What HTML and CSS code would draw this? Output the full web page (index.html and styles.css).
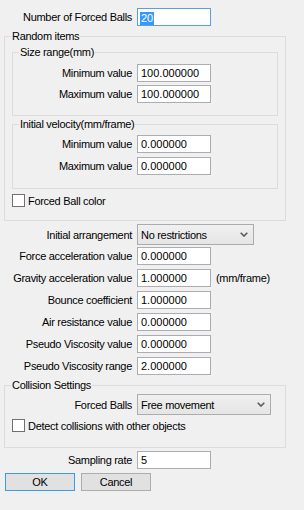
FILE: index.html
```html
<!DOCTYPE html>
<html lang="en">
<head>
  <meta charset="UTF-8">
  <title>Forced Balls</title>
  <link rel="stylesheet" href="styles.css">
</head>
<body>
  <div class="dialog">

    <div class="row">
      <label>Number of Forced Balls</label>
      <div class="edit focus"><span class="sel">20</span></div>
    </div>

    <fieldset class="group outer">
      <legend>Random items</legend>

      <fieldset class="group inner size">
        <legend>Size range(mm)</legend>
        <div class="row">
          <label>Minimum value</label>
          <div class="edit">100.000000</div>
        </div>
        <div class="row tight">
          <label>Maximum value</label>
          <div class="edit">100.000000</div>
        </div>
      </fieldset>

      <fieldset class="group inner velocity">
        <legend>Initial velocity(mm/frame)</legend>
        <div class="row">
          <label>Minimum value</label>
          <div class="edit">0.000000</div>
        </div>
        <div class="row">
          <label>Maximum value</label>
          <div class="edit">0.000000</div>
        </div>
      </fieldset>

      <div class="check ball-color">
        <span class="box"></span>
        <span>Forced Ball color</span>
      </div>
    </fieldset>

    <div class="row arrangement">
      <label>Initial arrangement</label>
      <div class="combo">
        <span>No restrictions</span>
        <svg width="8" height="5" viewBox="0 0 8 5"><polyline points="0.7,0.7 4,4 7.3,0.7" fill="none" stroke="#5a5a5a" stroke-width="1.6"/></svg>
      </div>
    </div>

    <div class="params">
      <div class="row">
        <label>Force acceleration value</label>
        <div class="edit">0.000000</div>
      </div>
      <div class="row">
        <label>Gravity acceleration value</label>
        <div class="edit">1.000000</div>
        <span class="unit">(mm/frame)</span>
      </div>
      <div class="row">
        <label>Bounce coefficient</label>
        <div class="edit">1.000000</div>
      </div>
      <div class="row">
        <label>Air resistance value</label>
        <div class="edit">0.000000</div>
      </div>
      <div class="row">
        <label>Pseudo Viscosity value</label>
        <div class="edit">0.000000</div>
      </div>
      <div class="row">
        <label>Pseudo Viscosity range</label>
        <div class="edit">2.000000</div>
      </div>
    </div>

    <fieldset class="group outer collision">
      <legend>Collision Settings</legend>
      <div class="row">
        <label>Forced Balls</label>
        <div class="combo wide">
          <span>Free movement</span>
          <svg width="8" height="5" viewBox="0 0 8 5"><polyline points="0.7,0.7 4,4 7.3,0.7" fill="none" stroke="#5a5a5a" stroke-width="1.6"/></svg>
        </div>
      </div>
      <div class="check detect">
        <span class="box"></span>
        <span>Detect collisions with other objects</span>
      </div>
    </fieldset>

    <div class="row sampling">
      <label>Sampling rate</label>
      <div class="edit">5</div>
    </div>

    <div class="buttons">
      <button class="btn default">OK</button>
      <button class="btn">Cancel</button>
    </div>

  </div>
</body>
</html>
```

FILE: styles.css
```css
* { box-sizing: border-box; }

body {
  margin: 0;
  background-color: #f0f0f0;
  font-family: "Liberation Sans", Arial, sans-serif;
  font-size: 11px;
  letter-spacing: -0.3px;
  color: #000;
}

.dialog {
  --lw: 132px;
  padding-top: 8px;
}

.row {
  display: flex;
  align-items: center;
  gap: 5px;
  height: 18px;
}

.row + .row {
  margin-top: 4px;
}

.row.tight {
  margin-top: 3px;
}

.row label {
  width: var(--lw);
  flex: none;
  text-align: right;
  white-space: nowrap;
}

.edit {
  width: 74px;
  height: 18px;
  border: 1px solid #abadb3;
  background: #fff;
  padding: 0 3px;
  line-height: 16px;
  letter-spacing: 0;
  white-space: nowrap;
}

.edit.focus {
  border-color: #5a9fe6;
  padding-left: 2px;
}

.sel {
  display: inline-block;
  background: #3399ff;
  color: #fff;
  line-height: 13px;
  padding: 0 1px;
  vertical-align: middle;
}

/* group boxes */
.group {
  margin: 0;
  padding: 0;
  border: 1px solid #dcdcdc;
  min-width: 0;
}

.group legend {
  padding: 0 1px;
  margin-left: 6px;
  line-height: 13px;
}

.outer {
  margin-left: 4px;
  width: 282px;
}

.dialog > .outer {
  margin-top: 4px;
  padding-bottom: 13px;
}

.inner {
  --lw: 119px;
  margin-left: 7px;
  width: 266px;
}

.size {
  margin-top: 3px;
  padding-top: 5px;
  padding-bottom: 12px;
}

.velocity {
  margin-top: 2px;
  padding-top: 4px;
  padding-bottom: 13px;
}

.check {
  display: flex;
  align-items: center;
  gap: 3px;
  height: 13px;
  margin-left: 7px;
  white-space: nowrap;
}

.check .box {
  width: 13px;
  height: 13px;
  border: 1px solid #707070;
  background: #fff;
  flex: none;
}

.ball-color {
  margin-top: 5px;
}

/* combos */
.combo {
  width: 117px;
  height: 21px;
  border: 1px solid #acacac;
  background: linear-gradient(#f0f0f0, #e5e5e5);
  display: flex;
  align-items: center;
  justify-content: space-between;
  padding: 0 5px 0 3px;
  white-space: nowrap;
}

.combo.wide {
  width: 134px;
}

.row.arrangement {
  height: 21px;
  margin-top: 3px;
}

.params {
  margin-top: 2px;
}

.collision {
  --lw: 127px;
  padding-top: 2px;
}

.dialog > .collision {
  padding-bottom: 15px;
}

.collision .row {
  height: 21px;
}

.detect {
  margin-top: 4px;
}

.row.sampling {
  margin-top: 3px;
}

/* buttons */
.buttons {
  display: flex;
  gap: 6px;
  margin-top: 4px;
  margin-left: 5px;
}

.btn {
  width: 70px;
  height: 18px;
  margin: 0;
  padding: 0;
  border: 1px solid #adadad;
  background: #e1e1e1;
  font-family: inherit;
  font-size: 11px;
  letter-spacing: -0.3px;
  color: #000;
  line-height: 16px;
}

.btn.default {
  border-color: #3c9be8;
}
```
